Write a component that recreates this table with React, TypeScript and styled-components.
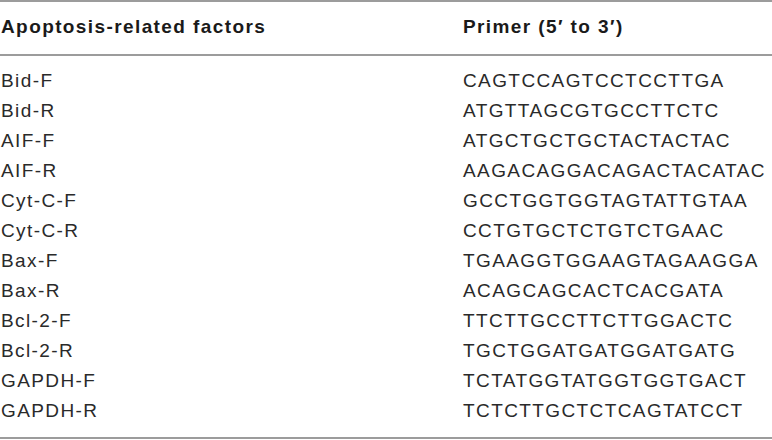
import React from "react";
import styled, { createGlobalStyle } from "styled-components";

const Global = createGlobalStyle`
  html, body { margin: 0; padding: 0; background: #ffffff; }
  body { font-family: "Liberation Sans", Arial, Helvetica, sans-serif; }
`;

const Table = styled.div`
  width: 772px;
  box-sizing: border-box;
  border-top: 2px solid #9c9c9c;
  border-bottom: 2px solid #9c9c9c;
  color: #222222;
`;

const Header = styled.div`
  display: grid;
  grid-template-columns: 462px 1fr;
  padding: 9.9px 0 12.1px 1px;
  border-bottom: 2px solid #9c9c9c;
`;

const HeadCell = styled.div`
  font-size: 19px;
  font-weight: 700;
  line-height: 30px;
  letter-spacing: 1.4px;
  white-space: nowrap;
  color: #1a1a1a;
`;

const Body = styled.div`
  display: grid;
  grid-template-columns: 462px 1fr;
  padding: 9.7px 0 11.3px 1px;
`;

const Cell = styled.div`
  font-size: 19px;
  line-height: 30px;
  letter-spacing: 1.4px;
  white-space: nowrap;
  color: #2a2a2a;
`;

const rows: [string, string][] = [
  ["Bid-F", "CAGTCCAGTCCTCCTTGA"],
  ["Bid-R", "ATGTTAGCGTGCCTTCTC"],
  ["AIF-F", "ATGCTGCTGCTACTACTAC"],
  ["AIF-R", "AAGACAGGACAGACTACATAC"],
  ["Cyt-C-F", "GCCTGGTGGTAGTATTGTAA"],
  ["Cyt-C-R", "CCTGTGCTCTGTCTGAAC"],
  ["Bax-F", "TGAAGGTGGAAGTAGAAGGA"],
  ["Bax-R", "ACAGCAGCACTCACGATA"],
  ["Bcl-2-F", "TTCTTGCCTTCTTGGACTC"],
  ["Bcl-2-R", "TGCTGGATGATGGATGATG"],
  ["GAPDH-F", "TCTATGGTATGGTGGTGACT"],
  ["GAPDH-R", "TCTCTTGCTCTCAGTATCCT"],
];

export default function App() {
  return (
    <>
      <Global />
      <Table>
        <Header>
          <HeadCell>Apoptosis-related factors</HeadCell>
          <HeadCell>Primer (5′ to 3′)</HeadCell>
        </Header>
        <Body>
          {rows.map(([name, seq]) => (
            <React.Fragment key={name}>
              <Cell>{name}</Cell>
              <Cell>{seq}</Cell>
            </React.Fragment>
          ))}
        </Body>
      </Table>
    </>
  );
}
